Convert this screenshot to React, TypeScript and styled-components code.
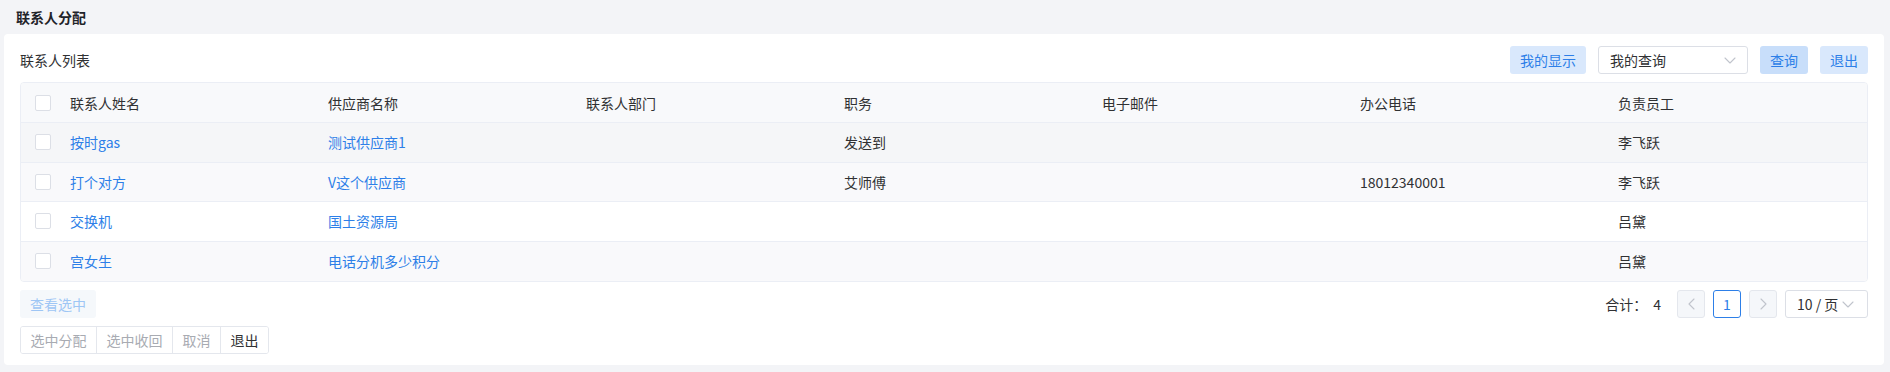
import React from "react";
import styled, { createGlobalStyle } from "styled-components";

const Global = createGlobalStyle`
  html, body { margin: 0; padding: 0; background: #f3f4f7; }
  body { font-family: "Noto Sans CJK SC", "Noto Sans", sans-serif; font-size: 14px; color: #303133; }
  * { box-sizing: border-box; }
`;

const Page = styled.div`
  padding: 0 6px 9px 4px;
`;

const PageTitle = styled.div`
  height: 34px;
  display: flex;
  align-items: center;
  padding-left: 12px;
  font-size: 14px;
  font-weight: 600;
  color: #1f2329;
`;

const Card = styled.div`
  background: #fff;
  border-radius: 4px;
  padding: 0 16px 11px;
`;

const Toolbar = styled.div`
  height: 48px;
  display: flex;
  align-items: center;
  justify-content: space-between;
  padding-top: 4px;
`;

const ListTitle = styled.div`
  font-size: 14px;
  color: #303133;
`;

const ToolGroup = styled.div`
  display: flex;
  align-items: center;
  gap: 12px;
`;

const LightButton = styled.button<{ $strong?: boolean; $w: number }>`
  height: 28px;
  width: ${(p) => p.$w}px;
  border: none;
  border-radius: 3px;
  background: ${(p) => (p.$strong ? "#c8defa" : "#d9e8fc")};
  color: #2d7fe8;
  font-family: inherit;
  font-size: 14px;
  padding: 0;
  cursor: pointer;
`;

const SelectBox = styled.div<{ $w: number }>`
  width: ${(p) => p.$w}px;
  height: 28px;
  border: 1px solid #dcdfe6;
  border-radius: 3px;
  background: #fff;
  display: flex;
  align-items: center;
  justify-content: space-between;
  padding: 0 11px;
  font-size: 14px;
  color: #303133;
`;

const Chevron = ({ dir = "down", color = "#c0c4cc" }: { dir?: "down" | "left" | "right"; color?: string }) => {
  const d =
    dir === "down" ? "M1 1 L6 6 L11 1" : dir === "left" ? "M6 1 L1 6 L6 11" : "M1 1 L6 6 L1 11";
  const w = dir === "down" ? 12 : 7;
  const h = dir === "down" ? 7 : 12;
  return (
    <svg width={w} height={h} viewBox={`0 0 ${w} ${h}`} fill="none">
      <path d={d} stroke={color} strokeWidth="1.1" strokeLinecap="round" strokeLinejoin="round" />
    </svg>
  );
};

const Table = styled.div`
  border: 1px solid #ebeef5;
  border-radius: 4px;
  overflow: hidden;
`;

const Row = styled.div<{ $bg: string; $h: number; $last?: boolean }>`
  display: grid;
  grid-template-columns: 41px repeat(6, 258px) 1fr;
  align-items: center;
  height: ${(p) => p.$h}px;
  background: ${(p) => p.$bg};
  border-bottom: ${(p) => (p.$last ? "none" : "1px solid #ebeef5")};
`;

const Cell = styled.div<{ $link?: boolean }>`
  padding-left: 8px;
  font-size: 14px;
  color: ${(p) => (p.$link ? "#2d7fe8" : "#303133")};
  white-space: nowrap;
`;

const CheckCell = styled.div`
  display: flex;
  justify-content: center;
  padding-left: 2px;
`;

const Checkbox = styled.span`
  width: 16px;
  height: 16px;
  border: 1px solid #dcdfe6;
  border-radius: 2px;
  background: #fff;
  display: inline-block;
`;

const Footer = styled.div`
  display: flex;
  justify-content: space-between;
  align-items: center;
  margin-top: 8px;
`;

const GhostButton = styled.button`
  height: 28px;
  width: 76px;
  border: none;
  border-radius: 3px;
  background: #f5f8fb;
  color: #9ec6f5;
  font-family: inherit;
  font-size: 14px;
  padding: 0;
`;

const Pager = styled.div`
  display: flex;
  align-items: center;
`;

const Total = styled.span`
  display: inline-flex;
  gap: 6px;
  font-size: 14px;
  color: #303133;
  margin-right: 16px;
`;

const PageBtn = styled.div<{ $active?: boolean }>`
  width: 28px;
  height: 28px;
  border: 1px solid ${(p) => (p.$active ? "#2d7fe8" : "#e4e7ed")};
  border-radius: 3px;
  background: ${(p) => (p.$active ? "#fff" : "#f5f7fa")};
  color: #2d7fe8;
  font-size: 14px;
  display: flex;
  align-items: center;
  justify-content: center;
  margin-right: 8px;
`;

const SizeSelect = styled(SelectBox)`
  padding: 0 8px 0 11px;
  justify-content: flex-start;
  gap: 4px;
`;

const Group = styled.div`
  display: inline-flex;
  margin-top: 8px;
  border: 1px solid #e4e7ed;
  border-radius: 3px;
  overflow: hidden;
`;

const GroupButton = styled.button<{ $w: number; $active?: boolean }>`
  height: 26px;
  width: ${(p) => p.$w}px;
  border: none;
  border-left: 1px solid #e4e7ed;
  background: #fff;
  color: ${(p) => (p.$active ? "#303133" : "#a8abb2")};
  font-family: inherit;
  font-size: 14px;
  padding: 0;
  &:first-child { border-left: none; }
`;

const columns = ["联系人姓名", "供应商名称", "联系人部门", "职务", "电子邮件", "办公电话", "负责员工"];

const rows = [
  { name: "按时gas", sup: "测试供应商1", dept: "", pos: "发送到", mail: "", tel: "", emp: "李飞跃", bg: "#f5f6f8" },
  { name: "打个对方", sup: "V这个供应商", dept: "", pos: "艾师傅", mail: "", tel: "18012340001", emp: "李飞跃", bg: "#f9f9fb" },
  { name: "交换机", sup: "国土资源局", dept: "", pos: "", mail: "", tel: "", emp: "吕黛", bg: "#ffffff" },
  { name: "宫女生", sup: "电话分机多少积分", dept: "", pos: "", mail: "", tel: "", emp: "吕黛", bg: "#f9f9fb" },
];

export default function App() {
  return (
    <Page>
      <Global />
      <PageTitle>联系人分配</PageTitle>
      <Card>
        <Toolbar>
          <ListTitle>联系人列表</ListTitle>
          <ToolGroup>
            <LightButton $w={76}>我的显示</LightButton>
            <SelectBox $w={150}>
              <span>我的查询</span>
              <Chevron />
            </SelectBox>
            <LightButton $w={48} $strong>查询</LightButton>
            <LightButton $w={48}>退出</LightButton>
          </ToolGroup>
        </Toolbar>
        <Table>
          <Row $bg="#f8f9fb" $h={40}>
            <CheckCell><Checkbox /></CheckCell>
            {columns.map((c) => (
              <Cell key={c}>{c}</Cell>
            ))}
          </Row>
          {rows.map((r, i) => (
            <Row key={r.name} $bg={r.bg} $h={39.5} $last={i === rows.length - 1}>
              <CheckCell><Checkbox /></CheckCell>
              <Cell $link>{r.name}</Cell>
              <Cell $link>{r.sup}</Cell>
              <Cell>{r.dept}</Cell>
              <Cell>{r.pos}</Cell>
              <Cell>{r.mail}</Cell>
              <Cell>{r.tel}</Cell>
              <Cell>{r.emp}</Cell>
            </Row>
          ))}
        </Table>
        <Footer>
          <GhostButton>查看选中</GhostButton>
          <Pager>
            <Total>
              <span>合计：</span>
              <span>4</span>
            </Total>
            <PageBtn><Chevron dir="left" /></PageBtn>
            <PageBtn $active>1</PageBtn>
            <PageBtn><Chevron dir="right" /></PageBtn>
            <SizeSelect $w={83}>
              <span>10 / 页</span>
              <Chevron />
            </SizeSelect>
          </Pager>
        </Footer>
        <Group>
          <GroupButton $w={75}>选中分配</GroupButton>
          <GroupButton $w={76}>选中收回</GroupButton>
          <GroupButton $w={48}>取消</GroupButton>
          <GroupButton $w={48} $active>退出</GroupButton>
        </Group>
      </Card>
    </Page>
  );
}
